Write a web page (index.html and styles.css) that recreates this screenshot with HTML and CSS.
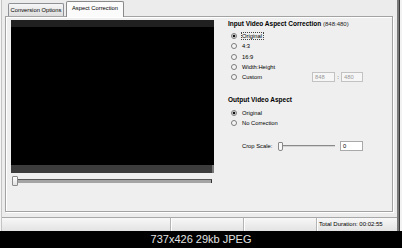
FILE: index.html
```html
<!DOCTYPE html>
<html>
<head>
<meta charset="utf-8">
<link rel="stylesheet" href="styles.css">
</head>
<body>
<div class="shot">
  <div class="win">
    <div class="tabs">
      <div class="tab">Conversion Options</div>
      <div class="tab active">Aspect Correction</div>
    </div>
    <div class="panel">
      <div class="player">
        <div class="video">
          <div class="vtop"></div>
          <div class="vbody"></div>
          <div class="vbottom"></div>
        </div>
        <div class="seek">
          <div class="seek-thumb"></div>
          <div class="seek-track"></div>
        </div>
      </div>
      <div class="settings">
        <div class="heading">Input Video Aspect Correction <span class="dim">(848:480)</span></div>
        <div class="group">
          <div class="row"><span class="radio on"></span><span class="lbl focus">Original</span></div>
          <div class="row"><span class="radio"></span><span class="lbl">4:3</span></div>
          <div class="row"><span class="radio"></span><span class="lbl">16:9</span></div>
          <div class="row"><span class="radio"></span><span class="lbl">Width:Height</span></div>
          <div class="row"><span class="radio"></span><span class="lbl wide">Custom</span><span class="box off">848</span><span class="colon">:</span><span class="box off short">480</span></div>
        </div>
        <div class="heading h2">Output Video Aspect</div>
        <div class="group g2">
          <div class="row"><span class="radio on"></span><span class="lbl">Original</span></div>
          <div class="row"><span class="radio"></span><span class="lbl">No Correction</span></div>
        </div>
        <div class="crop">
          <span class="lbl crop-lbl">Crop Scale:</span>
          <div class="mini">
            <div class="mini-thumb"></div>
            <div class="mini-track"></div>
          </div>
          <span class="box">0</span>
        </div>
      </div>
    </div>
    <div class="status">
      <div class="seg s1"></div>
      <div class="seg s2"></div>
      <div class="seg s3"></div>
      <div class="seg s4">Total Duration: 00:02:55</div>
    </div>
  </div>
  <div class="edge"></div>
</div>
<div class="caption">737x426 29kb JPEG</div>
</body>
</html>
```

FILE: styles.css
```css
* { box-sizing: border-box; }
html, body { margin: 0; padding: 0; }
body {
  width: 402px;
  height: 248px;
  overflow: hidden;
  background: #000;
  font-family: "Liberation Sans", Arial, sans-serif;
  color: #000;
}
.shot {
  display: flex;
  height: 231px;
  padding-left: 1px;
  background: #f4f4f4;
}
.win {
  width: 396px;
  display: flex;
  flex-direction: column;
  border-left: 1px solid #c4c4c4;
  background: #ececec;
}
.edge {
  width: 5px;
  border-left: 2px solid #7a7a7a;
  background: linear-gradient(to right, #3a3a3a 1px, #f2f2f2 1px);
}
/* tabs */
.tabs {
  height: 16px;
  display: flex;
  align-items: flex-end;
  padding-left: 6px;
}
.tab {
  height: 13px;
  width: 56px;
  border: 1px solid #8e9096;
  border-bottom: none;
  border-radius: 2px 2px 0 0;
  background: linear-gradient(#f6f6f6, #dedede);
  font-size: 5.8px;
  line-height: 12px;
  text-align: center;
  white-space: nowrap;
}
.tab.active {
  position: relative;
  z-index: 1;
  height: 16px;
  width: 58px;
  margin-left: 2px;
  margin-bottom: -1px;
  background: #fbfbfb;
  line-height: 13px;
  border-color: #8a8a8a;
}
/* panel */
.panel {
  width: 388px;
  height: 196px;
  margin-left: 3px;
  border: 1px solid #a3a3a3;
  box-shadow: inset 1px 1px 0 #fff, 1px 1px 0 #fff;
  background: #efefef;
  display: flex;
  padding: 3px 0 0 5px;
}
.player { width: 203px; }
.video {
  height: 153px;
  display: flex;
  flex-direction: column;
  background: #000;
}
.vtop { height: 7px; background: #202020; }
.vbody { flex: 1; background: #000; }
.vbottom {
  height: 8px;
  background: linear-gradient(to right, #3c3c3c 201px, #777 201px);
}
.seek {
  margin-top: 3px;
  height: 10px;
  display: flex;
  align-items: center;
  padding-left: 1px;
}
.seek-thumb {
  width: 6px;
  height: 10px;
  border: 1px solid #8a8a8a;
  border-radius: 1px;
  background: linear-gradient(#fdfdfd, #e2e2e2);
}
.seek-track {
  width: 194px;
  height: 4px;
  border-top: 1px solid #5a5a5a;
  border-right: 1px solid #333;
  background: #a4a4a4;
}
/* settings */
.settings {
  margin-left: 14px;
  flex: 1;
}
.heading {
  font-size: 6.5px;
  font-weight: bold;
  line-height: 8px;
  white-space: nowrap;
  color: #000;
}
.dim { font-weight: normal; color: #222; font-size: 6px; }
.group { margin-top: 3px; padding-left: 3px; }
.row {
  height: 10.25px;
  display: flex;
  align-items: center;
}
.radio {
  width: 6px;
  height: 6px;
  border-radius: 50%;
  border: 1px solid #7c7c7c;
  background: radial-gradient(circle, #f0f0f0, #fff);
  flex: none;
}
.radio.on {
  background: radial-gradient(circle, #111 1.2px, #fff 1.7px);
}
.lbl {
  margin-left: 5px;
  font-size: 5.8px;
  line-height: 6px;
  white-space: nowrap;
}
.focus { outline: 1px dotted #444; outline-offset: 0; padding-right: 1px; }
.wide { width: 70px; flex: none; }
.box {
  width: 23px;
  height: 10px;
  border: 1px solid #a9a9a9;
  background: #fff;
  font-size: 5.8px;
  line-height: 8px;
  padding-left: 2px;
  flex: none;
}
.box.off { background: #f6f6f6; color: #9a9a9a; border-color: #c2c2c2; }
.box.short { width: 22px; }
.colon {
  width: 6px;
  text-align: center;
  font-size: 6px;
  line-height: 8px;
}
.h2 { margin-top: 13.75px; }
.g2 { margin-top: 4px; }
.crop {
  margin-top: 12.5px;
  height: 10px;
  display: flex;
  align-items: center;
  padding-left: 14px;
}
.crop-lbl { margin-left: 0; width: 36px; flex: none; }
.mini {
  width: 57px;
  margin-right: 5px;
  height: 10px;
  display: flex;
  align-items: center;
}
.mini-thumb {
  width: 5px;
  height: 9px;
  border: 1px solid #888;
  border-radius: 1px 1px 2px 2px;
  background: #f7f7f7;
  flex: none;
}
.mini-track {
  flex: 1;
  height: 2px;
  border-top: 1px solid #8a8a8a;
  background: #d4d4d4;
}
/* status */
.status {
  margin-top: 5px;
  height: 14px;
  display: flex;
  border-top: 1px solid #a8a8a8;
  background: linear-gradient(#f7f7f7, #e3e3e3);
}
.seg { height: 100%; }
.s1 { width: 168px; }
.s2, .s3 {
  width: 73px;
  border-left: 1px solid #b4b4b4;
  box-shadow: inset 1px 0 0 #fff;
}
.s4 {
  flex: 1;
  border-left: 1px solid #b4b4b4;
  box-shadow: inset 1px 0 0 #fff;
  font-size: 6px;
  line-height: 13px;
  padding-left: 2px;
  white-space: nowrap;
}
.caption {
  height: 17px;
  background: #000;
  color: #e4e4e4;
  font-size: 11px;
  line-height: 17px;
  text-align: center;
}
```
